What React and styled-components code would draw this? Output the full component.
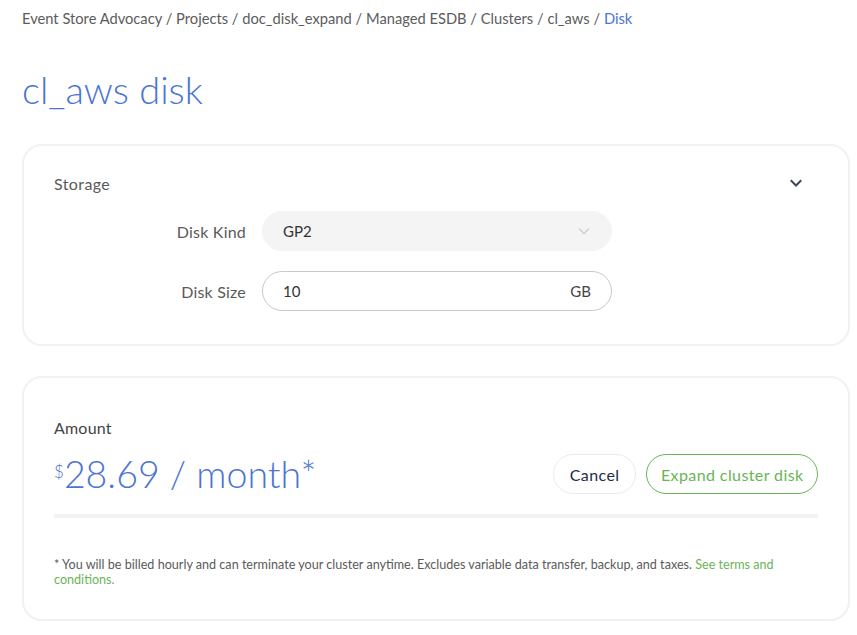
import styled, { createGlobalStyle } from "styled-components";

const GlobalStyle = createGlobalStyle`
  body {
    margin: 0;
    background: #fff;
    font-family: Lato, "Open Sans", sans-serif;
    color: #555;
  }
`;

const BLUE = "#4b74d4";
const GREEN = "#6ab457";

const Page = styled.div`
  width: 828px;
  padding: 9px 0 14px 22px;
`;

const Breadcrumb = styled.nav`
  font-size: 14.7px;
  line-height: 18px;
  color: #5c5c5c;
`;

const Crumb = styled.span`
  color: ${({ current }) => (current ? BLUE : "#5c5c5c")};
`;

const Title = styled.h1`
  margin: 42px 0 35px;
  font-size: 38px;
  line-height: 40px;
  font-weight: 300;
  color: ${BLUE};
`;

const Card = styled.section`
  border: 2px solid #f1f1f1;
  border-radius: 20px;
  padding: ${({ pad }) => pad};
  margin-bottom: 30px;
`;

const CardHeader = styled.div`
  display: flex;
  justify-content: space-between;
  align-items: center;
  height: 24px;
  font-size: 16px;
  letter-spacing: 0.4px;
  color: #5a5a5a;
`;

const Toggle = styled.button`
  border: 0;
  background: none;
  padding: 0;
  margin-right: 15px;
  display: flex;
  cursor: pointer;
`;

const Form = styled.div`
  display: grid;
  grid-template-columns: 192px 350px;
  column-gap: 16px;
  row-gap: 20px;
  align-items: center;
  margin-top: 16px;
`;

const Label = styled.label`
  text-align: right;
  font-size: 16px;
  letter-spacing: 0.2px;
  color: #5a5a5a;
`;

const Field = styled.div`
  display: flex;
  align-items: center;
  justify-content: space-between;
  height: 40px;
  box-sizing: border-box;
  padding: 0 20px;
  border-radius: 20px;
  font-size: 15px;
  color: #333;
  background: ${({ filled }) => (filled ? "#f4f4f4" : "#fff")};
  border: 1px solid ${({ filled }) => (filled ? "#f4f4f4" : "#c9c9c9")};
`;

const Unit = styled.span`
  color: #444;
`;

const AmountLabel = styled.div`
  font-size: 16px;
  letter-spacing: 0.2px;
  line-height: 20px;
  color: #444;
`;

const PriceRow = styled.div`
  display: flex;
  justify-content: space-between;
  align-items: center;
  margin-top: 14px;
  padding-bottom: 18px;
  border-bottom: 4px solid #f3f3f3;
`;

const Price = styled.div`
  font-size: 37.5px;
  line-height: 44px;
  font-weight: 300;
  color: ${BLUE};
`;

const Currency = styled.sup`
  font-size: 17px;
  vertical-align: top;
  position: relative;
  top: -2px;
`;

const Actions = styled.div`
  display: flex;
  gap: 10px;
`;

const Button = styled.button`
  height: 40px;
  padding: 0 ${({ primary }) => (primary ? "13.5px" : "16px")};
  border-radius: 20px;
  background: #fff;
  font-family: Lato, sans-serif;
  font-size: 16px;
  letter-spacing: 0.4px;
  cursor: pointer;
  color: ${({ primary }) => (primary ? GREEN : "#222c44")};
  border: 1px solid ${({ primary }) => (primary ? GREEN : "#ebebeb")};
`;

const Note = styled.p`
  margin: 40px 0 0;
  font-size: 12.6px;
  line-height: 14.5px;
  color: #5a5a5a;
`;

const TermsLink = styled.a`
  color: ${GREEN};
  text-decoration: none;
`;

function Chevron({ color, size = 14, width = 2 }) {
  return (
    <svg width={size} height={size} viewBox="0 0 14 14" fill="none">
      <path d="M2.5 5l4.5 4.5L11.5 5" stroke={color} strokeWidth={width} strokeLinecap="square" />
    </svg>
  );
}

const crumbs = ["Event Store Advocacy", "Projects", "doc_disk_expand", "Managed ESDB", "Clusters", "cl_aws"];

export default function App() {
  return (
    <Page>
      <GlobalStyle />
      <Breadcrumb>
        {crumbs.map((c) => (
          <span key={c}>
            <Crumb>{c}</Crumb> /{" "}
          </span>
        ))}
        <Crumb current>Disk</Crumb>
      </Breadcrumb>

      <Title>cl_aws disk</Title>

      <Card pad="25px 30px 33px 30px">
        <CardHeader>
          Storage
          <Toggle aria-label="Collapse">
            <Chevron color="#3d4658" />
          </Toggle>
        </CardHeader>
        <Form>
          <Label>Disk Kind</Label>
          <Field filled>
            GP2
            <Chevron color="#cfcfcf" size={14} width={1.5} />
          </Field>
          <Label>Disk Size</Label>
          <Field>
            10
            <Unit>GB</Unit>
          </Field>
        </Form>
      </Card>

      <Card pad="40px 30px 32px 30px">
        <AmountLabel>Amount</AmountLabel>
        <PriceRow>
          <Price>
            <Currency>$</Currency>28.69 / month*
          </Price>
          <Actions>
            <Button>Cancel</Button>
            <Button primary>Expand cluster disk</Button>
          </Actions>
        </PriceRow>
        <Note>
          * You will be billed hourly and can terminate your cluster anytime. Excludes variable data transfer,
          backup, and taxes. <TermsLink href="#">See terms and conditions.</TermsLink>
        </Note>
      </Card>
    </Page>
  );
}
